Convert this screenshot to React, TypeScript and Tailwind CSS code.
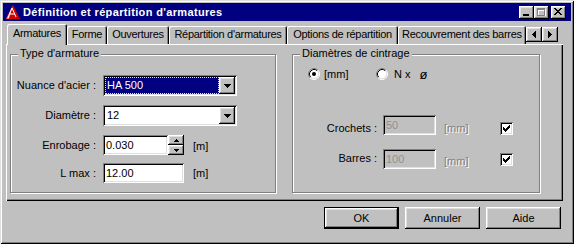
import React from 'react';

const raised = 'shadow-[inset_-1px_-1px_#000,inset_1px_1px_#fff,inset_-2px_-2px_#808080,inset_2px_2px_#dfdfdf]';
const sunken = 'shadow-[inset_1px_1px_#808080,inset_-1px_-1px_#fff,inset_2px_2px_#000,inset_-2px_-2px_#dfdfdf]';
const etched = 'border border-[#808080] shadow-[inset_1px_1px_#fff,1px_1px_#fff]';
const disabledText = 'text-[#808080] [text-shadow:1px_1px_0_#fff]';

const DownArrow = () => (
  <svg width="7" height="4" viewBox="0 0 7 4" shapeRendering="crispEdges">
    <path d="M0 0h7v1H0zM1 1h5v1H1zM2 2h3v1H2zM3 3h1v1H3z" fill="#000" />
  </svg>
);

const SmallArrow = ({ up }: { up?: boolean }) => (
  <svg width="5" height="3" viewBox="0 0 5 3" shapeRendering="crispEdges">
    {up ? (
      <path d="M2 0h1v1H2zM1 1h3v1H1zM0 2h5v1H0z" fill="#000" />
    ) : (
      <path d="M0 0h5v1H0zM1 1h3v1H1zM2 2h1v1H2z" fill="#000" />
    )}
  </svg>
);

const SideArrow = ({ right }: { right?: boolean }) => (
  <svg width="4" height="7" viewBox="0 0 4 7" shapeRendering="crispEdges">
    {right ? (
      <path d="M0 0h1v7H0zM1 1h1v5H1zM2 2h1v3H2zM3 3h1v1H3z" fill="#000" />
    ) : (
      <path d="M3 0h1v7H3zM2 1h1v5H2zM1 2h1v3H1zM0 3h1v1H0z" fill="#000" />
    )}
  </svg>
);

const CheckBox = () => (
  <div className={`w-[13px] h-[13px] bg-white flex items-center justify-center ${sunken}`}>
    <svg width="7" height="7" viewBox="0 0 7 7" shapeRendering="crispEdges">
      <path d="M6 0h1v3H6zM5 1h1v3H5zM4 2h1v3H4zM3 3h1v3H3zM2 4h1v3H2zM1 3h1v3H1zM0 2h1v3H0z" fill="#000" />
    </svg>
  </div>
);

const Radio = ({ checked }: { checked?: boolean }) => (
  <svg width="12" height="12" viewBox="0 0 12 12">
    <circle cx="6" cy="6" r="5" fill="#fff" />
    <path d="M2.11 9.89A5.5 5.5 0 0 1 9.89 2.11" stroke="#808080" fill="none" />
    <path d="M9.89 2.11A5.5 5.5 0 0 1 2.11 9.89" stroke="#fff" fill="none" />
    <path d="M2.82 9.18A4.5 4.5 0 0 1 9.18 2.82" stroke="#000" fill="none" />
    <path d="M9.18 2.82A4.5 4.5 0 0 1 2.82 9.18" stroke="#dfdfdf" fill="none" />
    {checked && <circle cx="6" cy="6" r="2" fill="#000" />}
  </svg>
);

const AppIcon = () => (
  <svg width="16" height="16" viewBox="0 0 16 16">
    <path d="M8 1L15 15H1z" fill="#d00000" />
    <path d="M8 1L1 15h3z" fill="#ff6060" />
    <path d="M7 4L3 14M7 4l4 9M5 10h5" stroke="#fff" strokeWidth="1" fill="none" />
  </svg>
);

function TitleButton({ kind }: { kind: 'min' | 'max' | 'close' }) {
  return (
    <div className={`w-[15px] h-[13px] bg-[#c0c0c0] flex items-center justify-center ${raised}`}>
      <svg width="9" height="8" viewBox="0 0 9 8" shapeRendering="crispEdges">
        {kind === 'min' && <path d="M1 6h6v2H1z" fill="#000" />}
        {kind === 'max' && (
          <>
            <path d="M1 1h8v8H1zM2 3v5h6V3z" fill="#fff" fillRule="evenodd" />
            <path d="M0 0h8v8H0zM1 2v5h6V2z" fill="#808080" fillRule="evenodd" />
          </>
        )}
        {kind === 'close' && (
          <path d="M0 0h2v1H0zM6 0h2v1H6zM1 1h2v1H1zM5 1h2v1H5zM2 2h4v1H2zM3 3h2v1H3zM2 4h4v1H2zM1 5h2v1H1zM5 5h2v1H5zM0 6h2v1H0zM6 6h2v1H6z" fill="#000" />
        )}
      </svg>
    </div>
  );
}

const tabs = [
  { label: 'Armatures', w: 'w-[60px]', active: true },
  { label: 'Forme', w: 'w-[40px]' },
  { label: 'Ouvertures', w: 'w-[62px]' },
  { label: "Répartition d'armatures", w: 'w-[118px]' },
  { label: 'Options de répartition', w: 'w-[111px]' },
  { label: 'Recouvrement des barres', w: 'w-[128px]', clipped: true },
];

function Combo({ value, focused }: { value: string; focused?: boolean }) {
  return (
    <div className={`flex h-[21px] w-[134px] bg-white p-[2px] ${sunken}`}>
      <div className="flex-1 flex items-center">
        {focused ? (
          <div className="h-full w-full bg-[#000080] text-white border border-dotted border-[#ffff00] pl-[1px] flex items-center">
            {value}
          </div>
        ) : (
          <span className="pl-[2px]">{value}</span>
        )}
      </div>
      <div className={`w-[16px] h-[17px] bg-[#c0c0c0] flex items-center justify-center ${raised}`}>
        <DownArrow />
      </div>
    </div>
  );
}

function Edit({ value, w, disabled }: { value: string; w: string; disabled?: boolean }) {
  return (
    <div className={`h-[20px] ${w} flex items-center pl-[3px] ${disabled ? 'bg-[#c0c0c0] text-[#909090]' : 'bg-white'} ${sunken}`}>
      {value}
    </div>
  );
}

export default function App() {
  return (
    <div className="w-[574px] h-[244px] bg-[#c0c0c0] p-[3px] flex flex-col text-[11px] leading-[13px] text-black font-['Liberation_Sans',Arial,sans-serif] overflow-hidden select-none shadow-[inset_1px_1px_#dfdfdf,inset_-1px_-1px_#000,inset_2px_2px_#fff,inset_-2px_-2px_#808080]">
      {/* barre de titre */}
      <div className="h-[18px] bg-[#000080] flex items-center pl-[2px] pr-[5px]">
        <AppIcon />
        <span className="ml-[2px] text-white font-bold tracking-[0.35px]">Définition et répartition d'armatures</span>
        <div className="ml-auto flex items-center">
          <TitleButton kind="min" />
          <TitleButton kind="max" />
          <div className="w-[2px]" />
          <TitleButton kind="close" />
        </div>
      </div>

      {/* onglets */}
      <div className="relative z-10 mt-[3px] ml-[4px] h-[20px] flex items-end tracking-[-0.3px]">
        {tabs.map(t => (
          <div
            key={t.label}
            className={`${t.w} shrink-0 bg-[#c0c0c0] whitespace-nowrap overflow-hidden rounded-t-[2px] shadow-[inset_1px_1px_#fff,inset_-1px_0_#000,inset_-2px_0_#808080] ${
              t.active ? 'h-[21px] -mb-[1px] pt-[3px] text-center' : 'h-[18px] pt-[2px]'
            } ${t.clipped ? 'pl-[4px]' : 'text-center'}`}
          >
            {t.label}
          </div>
        ))}
        <div className="self-start mt-[3px] flex">
          <div className={`w-[16px] h-[15px] bg-[#c0c0c0] flex items-center justify-center ${raised}`}>
            <SideArrow />
          </div>
          <div className={`w-[16px] h-[15px] bg-[#c0c0c0] flex items-center justify-center ${raised}`}>
            <SideArrow right />
          </div>
        </div>
      </div>

      {/* panneau */}
      <div className="ml-[3px] w-[557px] h-[157px] flex items-start pl-[4px] pt-[10px] gap-[16px] shadow-[inset_1px_1px_#fff,inset_-1px_-1px_#000,inset_-2px_-2px_#808080]">
        <div className={`relative w-[266px] h-[139px] ${etched}`}>
          <span className="absolute left-[7px] -top-[8px] bg-[#c0c0c0] px-[2px]">Type d'armature</span>
          <div className="pt-[20px] grid grid-cols-[85px_auto] gap-x-[7px] items-center">
            <span className="text-right">Nuance d'acier :</span>
            <Combo value="HA 500" focused />
            <span className="text-right mt-[9px]">Diamètre :</span>
            <div className="mt-[9px]">
              <Combo value="12" />
            </div>
            <span className="text-right mt-[9px]">Enrobage :</span>
            <div className="mt-[9px] flex items-center">
              <Edit value="0.030" w="w-[65px]" />
              <div className="flex flex-col">
                <div className={`w-[16px] h-[10px] bg-[#c0c0c0] flex items-center justify-center ${raised}`}>
                  <SmallArrow up />
                </div>
                <div className={`w-[16px] h-[10px] bg-[#c0c0c0] flex items-center justify-center ${raised}`}>
                  <SmallArrow />
                </div>
              </div>
              <span className="ml-[9px] mt-[2px]">[m]</span>
            </div>
            <span className="text-right mt-[8px]">L max :</span>
            <div className="mt-[8px] flex items-center">
              <Edit value="12.00" w="w-[81px]" />
              <span className="ml-[9px] mt-[1px]">[m]</span>
            </div>
          </div>
        </div>

        <div className={`relative w-[248px] h-[139px] ${etched}`}>
          <span className="absolute left-[7px] -top-[8px] bg-[#c0c0c0] px-[2px]">Diamètres de cintrage</span>
          <div className="mt-[12px] h-[14px] pl-[15px] flex items-center">
            <div className="w-[68px] flex items-center gap-[4px]">
              <Radio checked />
              <span>[mm]</span>
            </div>
            <div className="flex items-center gap-[6px]">
              <Radio />
              <span>N x</span>
              <span className="ml-[3px] text-[13px]">ø</span>
            </div>
          </div>
          <div className="mt-[34px] flex items-start">
            <span className="w-[84px] text-right mt-[7px]">Crochets :</span>
            <div className="ml-[6px]">
              <Edit value="50" w="w-[53px]" disabled />
            </div>
            <span className={`ml-[8px] w-[56px] mt-[7px] ${disabledText}`}>[mm]</span>
            <div className="mt-[7px]">
              <CheckBox />
            </div>
          </div>
          <div className="mt-[14px] flex items-start">
            <span className="w-[84px] text-right mt-[3px]">Barres :</span>
            <div className="ml-[6px]">
              <Edit value="100" w="w-[53px]" disabled />
            </div>
            <span className={`ml-[8px] w-[56px] mt-[6px] ${disabledText}`}>[mm]</span>
            <div className="mt-[4px]">
              <CheckBox />
            </div>
          </div>
        </div>
      </div>

      {/* boutons */}
      <div className="mt-[6px] mr-[10px] flex justify-end gap-[6px]">
        <div className="w-[75px] h-[22px] border border-black">
          <div className={`w-full h-full flex items-center justify-center ${raised}`}>OK</div>
        </div>
        <div className={`w-[75px] h-[22px] flex items-center justify-center ${raised}`}>Annuler</div>
        <div className={`w-[75px] h-[22px] flex items-center justify-center ${raised}`}>Aide</div>
      </div>
    </div>
  );
}
